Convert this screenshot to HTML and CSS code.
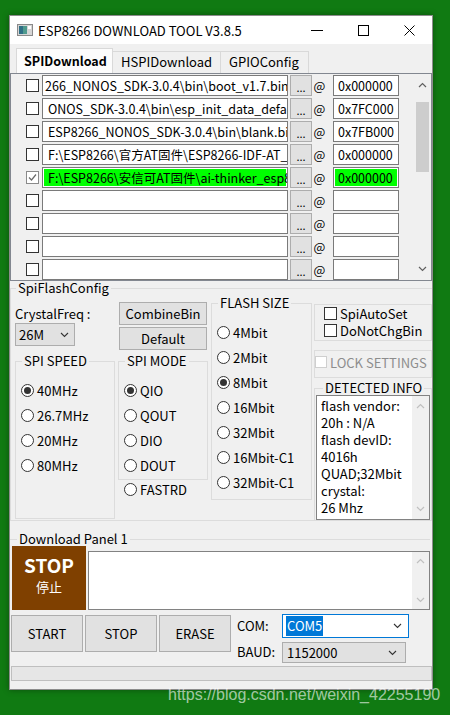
FILE: index.html
```html
<!DOCTYPE html>
<html lang="zh-CN">
<head>
    <meta charset="UTF-8">
    <meta name="viewport" content="width=device-width, initial-scale=1.0">
    <title>ESP8266 DOWNLOAD TOOL V3.8.5</title>
    <link rel="stylesheet" href="styles.css">
</head>
<body>
    <div class="window">
        <div class="titlebar">
            <svg class="app-icon" width="16" height="12" viewBox="0 0 16 12">
                <rect x="0.5" y="0.5" width="15" height="11" fill="#d6d6d6" stroke="#8a8a8a"/>
                <rect x="2" y="2" width="4" height="8" fill="#2f6f86"/>
                <rect x="6" y="2" width="4" height="8" fill="#4f9a8e"/>
                <rect x="11" y="2" width="3" height="3" fill="#ffffff"/>
            </svg>
            <span class="title">ESP8266 DOWNLOAD TOOL V3.8.5</span>
            <div class="win-controls">
                <span class="ctl"><svg width="12" height="12" viewBox="0 0 12 12"><line x1="0" y1="6.5" x2="12" y2="6.5" stroke="#000"/></svg></span>
                <span class="ctl"><svg width="11" height="11" viewBox="0 0 11 11"><rect x="0.5" y="0.5" width="10" height="10" fill="none" stroke="#000"/></svg></span>
                <span class="ctl"><svg width="11" height="11" viewBox="0 0 11 11"><path d="M0.5 0.5 L10.5 10.5 M10.5 0.5 L0.5 10.5" stroke="#000" fill="none"/></svg></span>
            </div>
        </div>

        <div class="tabs">
            <div class="tab active">SPIDownload</div>
            <div class="tab tab-hspi">HSPIDownload</div>
            <div class="tab tab-gpio">GPIOConfig</div>
        </div>

        <!-- firmware file list -->
        <div class="filelist">
            <div class="rows">
                <div class="row">
                    <span class="chk"></span>
                    <div class="path shifted">266_NONOS_SDK-3.0.4\bin\boot_v1.7.bin</div>
                    <button class="browse">...</button>
                    <span class="at">@</span>
                    <div class="addr">0x000000</div>
                </div>
                <div class="row">
                    <span class="chk"></span>
                    <div class="path">ONOS_SDK-3.0.4\bin\esp_init_data_defau</div>
                    <button class="browse">...</button>
                    <span class="at">@</span>
                    <div class="addr">0x7FC000</div>
                </div>
                <div class="row">
                    <span class="chk"></span>
                    <div class="path">ESP8266_NONOS_SDK-3.0.4\bin\blank.bin</div>
                    <button class="browse">...</button>
                    <span class="at">@</span>
                    <div class="addr">0x7FB000</div>
                </div>
                <div class="row">
                    <span class="chk"></span>
                    <div class="path">F:\ESP8266\官方AT固件\ESP8266-IDF-AT_V</div>
                    <button class="browse">...</button>
                    <span class="at">@</span>
                    <div class="addr">0x000000</div>
                </div>
                <div class="row">
                    <span class="chk checked"><svg width="11" height="11" viewBox="0 0 11 11"><path d="M2 5.5 L4.5 8 L9 2.5" fill="none" stroke="#6a6a6a" stroke-width="1.2"/></svg></span>
                    <div class="path ok">F:\ESP8266\安信可AT固件\ai-thinker_esp82</div>
                    <button class="browse">...</button>
                    <span class="at">@</span>
                    <div class="addr ok">0x000000</div>
                </div>
                <div class="row">
                    <span class="chk"></span>
                    <div class="path"></div>
                    <button class="browse">...</button>
                    <span class="at">@</span>
                    <div class="addr"></div>
                </div>
                <div class="row">
                    <span class="chk"></span>
                    <div class="path"></div>
                    <button class="browse">...</button>
                    <span class="at">@</span>
                    <div class="addr"></div>
                </div>
                <div class="row">
                    <span class="chk"></span>
                    <div class="path"></div>
                    <button class="browse">...</button>
                    <span class="at">@</span>
                    <div class="addr"></div>
                </div>
                <div class="row">
                    <span class="chk"></span>
                    <div class="path"></div>
                    <button class="browse">...</button>
                    <span class="at">@</span>
                    <div class="addr"></div>
                </div>
            </div>
            <div class="vscroll">
                <span class="arrow"><svg width="9" height="6" viewBox="0 0 9 6"><path d="M1 5 L4.5 1.5 L8 5" fill="none" stroke="#606060" stroke-width="1.2"/></svg></span>
                <div class="thumb"></div>
                <span class="arrow bottom"><svg width="9" height="6" viewBox="0 0 9 6"><path d="M1 1 L4.5 4.5 L8 1" fill="none" stroke="#606060" stroke-width="1.2"/></svg></span>
            </div>
        </div>

        <fieldset class="group config">
            <legend>SpiFlashConfig</legend>
            <div class="cols">
                <div class="col col-a">
                    <div class="crystal-label">CrystalFreq :</div>
                    <div class="combo crystal">
                        <span>26M</span>
                        <svg width="9" height="6" viewBox="0 0 9 6"><path d="M1 1 L4.5 4.5 L8 1" fill="none" stroke="#333" stroke-width="1.1"/></svg>
                    </div>
                    <fieldset class="group radios speed">
                        <legend>SPI SPEED</legend>
                        <div class="radio"><span class="dot on"></span>40MHz</div>
                        <div class="radio"><span class="dot"></span>26.7MHz</div>
                        <div class="radio"><span class="dot"></span>20MHz</div>
                        <div class="radio"><span class="dot"></span>80MHz</div>
                    </fieldset>
                </div>

                <div class="col col-b">
                    <button class="btn combine">CombineBin</button>
                    <button class="btn default">Default</button>
                    <fieldset class="group radios mode">
                        <legend>SPI MODE</legend>
                        <div class="radio"><span class="dot on"></span>QIO</div>
                        <div class="radio"><span class="dot"></span>QOUT</div>
                        <div class="radio"><span class="dot"></span>DIO</div>
                        <div class="radio"><span class="dot"></span>DOUT</div>
                    </fieldset>
                    <div class="radio fastrd"><span class="dot"></span>FASTRD</div>
                </div>

                <div class="col col-c">
                    <fieldset class="group radios size">
                        <legend>FLASH SIZE</legend>
                        <div class="radio"><span class="dot"></span>4Mbit</div>
                        <div class="radio"><span class="dot"></span>2Mbit</div>
                        <div class="radio"><span class="dot on"></span>8Mbit</div>
                        <div class="radio"><span class="dot"></span>16Mbit</div>
                        <div class="radio"><span class="dot"></span>32Mbit</div>
                        <div class="radio"><span class="dot"></span>16Mbit-C1</div>
                        <div class="radio"><span class="dot"></span>32Mbit-C1</div>
                    </fieldset>
                </div>

                <div class="col col-d">
                    <div class="box opts">
                        <div class="check"><span class="chk"></span>SpiAutoSet</div>
                        <div class="check"><span class="chk"></span>DoNotChgBin</div>
                    </div>
                    <div class="box lock">
                        <span class="chk disabled"></span>
                        <span class="lock-text">LOCK SETTINGS</span>
                    </div>
                    <fieldset class="group detected">
                        <legend>DETECTED INFO</legend>
                        <div class="info">
                            <div class="info-text">
                                flash vendor:<br>
                                20h : N/A<br>
                                flash devID:<br>
                                4016h<br>
                                QUAD;32Mbit<br>
                                crystal:<br>
                                26 Mhz
                            </div>
                            <div class="mini-scroll">
                                <svg width="9" height="6" viewBox="0 0 9 6"><path d="M1 5 L4.5 1.5 L8 5" fill="none" stroke="#c0c0c0" stroke-width="1.2"/></svg>
                                <svg width="9" height="6" viewBox="0 0 9 6"><path d="M1 1 L4.5 4.5 L8 1" fill="none" stroke="#c0c0c0" stroke-width="1.2"/></svg>
                            </div>
                        </div>
                    </fieldset>
                </div>
            </div>
        </fieldset>

        <fieldset class="group panel">
            <legend>Download Panel 1</legend>
            <div class="panel-body">
                <div class="stopbox">
                    <span class="stop-en">STOP</span>
                    <span class="stop-cn">停止</span>
                </div>
                <div class="log">
                    <div class="mini-scroll">
                        <svg width="9" height="6" viewBox="0 0 9 6"><path d="M1 5 L4.5 1.5 L8 5" fill="none" stroke="#c0c0c0" stroke-width="1.2"/></svg>
                        <svg width="9" height="6" viewBox="0 0 9 6"><path d="M1 1 L4.5 4.5 L8 1" fill="none" stroke="#c0c0c0" stroke-width="1.2"/></svg>
                    </div>
                </div>
            </div>
        </fieldset>

        <div class="actions">
            <button class="btn big">START</button>
            <button class="btn big">STOP</button>
            <button class="btn big">ERASE</button>
            <div class="ports">
                <span class="port-label">COM:</span>
                <div class="combo com">
                    <span class="selected">COM5</span>
                    <svg width="9" height="6" viewBox="0 0 9 6"><path d="M1 1 L4.5 4.5 L8 1" fill="none" stroke="#333" stroke-width="1.1"/></svg>
                </div>
                <span class="port-label">BAUD:</span>
                <div class="combo baud">
                    <span>1152000</span>
                    <svg width="9" height="6" viewBox="0 0 9 6"><path d="M1 1 L4.5 4.5 L8 1" fill="none" stroke="#333" stroke-width="1.1"/></svg>
                </div>
            </div>
        </div>

        <div class="statusbar"></div>
    </div>

    <div class="watermark">https://blog.csdn.net/weixin_42255190</div>
</body>
</html>
```

FILE: styles.css
```css
* {
    box-sizing: border-box;
}

body {
    margin: 0;
    width: 450px;
    height: 715px;
    overflow: hidden;
    position: relative;
    background-color: #107a12;
    font-family: "Noto Sans CJK SC", "Noto Sans", sans-serif;
    font-size: 13px;
    color: #000;
}

button {
    font-family: inherit;
    font-size: 13px;
    color: #000;
    padding: 0;
}

.window {
    margin: 15px 0 0 9px;
    width: 424px;
    height: 675px;
    background-color: #f0f0f0;
    border: 1px solid #8c8c8c;
    box-shadow: 0 0 6px rgba(0, 0, 0, 0.35);
}

/* title bar */
.titlebar {
    height: 28px;
    background-color: #fff;
    display: flex;
    align-items: center;
}

.app-icon {
    margin-left: 7px;
}

.title {
    margin-left: 5px;
    font-size: 13px;
}

.win-controls {
    margin-left: auto;
    display: flex;
    height: 100%;
}

.ctl {
    width: 46px;
    display: flex;
    align-items: center;
    justify-content: center;
}

/* tabs */
.tabs {
    height: 29px;
    display: flex;
    align-items: flex-end;
    padding-left: 6px;
}

.tab {
    height: 22px;
    line-height: 20px;
    padding-left: 7px;
    border: 1px solid #d9d9d9;
    border-bottom: none;
    background-color: #f0f0f0;
    margin-right: -1px;
}

.tab.active {
    width: 97px;
    height: 25px;
    line-height: 23px;
    font-weight: bold;
    font-size: 12.5px;
    background-color: #fcfcfc;
}

.tab-hspi {
    width: 109px;
    padding-left: 8px;
}

.tab-gpio {
    width: 89px;
    padding-left: 8px;
}

/* file list */
.filelist {
    height: 208px;
    border: 1px solid #828790;
    display: flex;
    background-color: #f0f0f0;
}

.rows {
    flex: 1;
    overflow: hidden;
    padding-top: 1px;
}

.row {
    display: flex;
    align-items: center;
    height: 21px;
    margin-bottom: 2px;
}

.chk {
    width: 13px;
    height: 13px;
    border: 1px solid #333;
    background-color: #fff;
    display: inline-flex;
    align-items: center;
    justify-content: center;
    flex-shrink: 0;
}

.row .chk {
    margin-left: 15px;
    margin-right: 3px;
}

.chk.checked {
    border-color: #8a8a8a;
}

.path,
.addr {
    height: 21px;
    border: 1px solid #7a7a7a;
    background-color: #fff;
    line-height: 19px;
    font-size: 12.5px;
    white-space: nowrap;
    overflow: hidden;
    flex-shrink: 0;
}

.path {
    width: 246px;
    padding-left: 5px;
}

.path.shifted {
    padding-left: 2px;
}

.addr {
    width: 66px;
    margin-left: 7px;
    padding-left: 4px;
}

.path.ok,
.addr.ok {
    background-color: #00ff00;
    box-shadow: inset 0 0 0 1px #fff;
}

.browse {
    width: 22px;
    height: 21px;
    margin-left: 2px;
    background-color: #e1e1e1;
    border: 1px solid #adadad;
    line-height: 22px;
    font-size: 11px;
    flex-shrink: 0;
}

.at {
    width: 13px;
    margin-left: 1px;
    text-align: center;
    font-size: 12.5px;
    flex-shrink: 0;
}

.vscroll {
    width: 17px;
    display: flex;
    flex-direction: column;
    align-items: center;
    background-color: #f0f0f0;
}

.arrow {
    height: 22px;
    display: flex;
    align-items: center;
}

.arrow.bottom {
    margin-top: auto;
}

.thumb {
    width: 13px;
    height: 70px;
    margin-top: 6px;
    background-color: #cdcdcd;
}

/* group boxes */
fieldset.group {
    margin: 0;
    min-width: 0;
    border: 1px solid #dcdcdc;
    padding: 0 0 0 5px;
}

fieldset.group legend {
    padding: 0 2px;
    margin-left: 1px;
    line-height: 14px;
    font-size: 13px;
}

fieldset.config {
    padding-left: 4px;
    border-right: none;
}

.cols {
    display: flex;
    align-items: flex-start;
}

.col {
    display: flex;
    flex-direction: column;
    align-items: flex-start;
}

.col-a {
    width: 100px;
}

.col-b {
    width: 90px;
    margin-left: 3px;
}

.col-c {
    width: 101px;
    margin-left: 3px;
}

.col-d {
    width: 118px;
    margin-left: 2px;
}

.crystal-label {
    margin-top: 11px;
    line-height: 16px;
}

.combo {
    display: flex;
    align-items: center;
    justify-content: space-between;
    border: 1px solid #adadad;
    background-color: #e1e1e1;
}

.crystal {
    width: 60px;
    height: 23px;
    margin-top: 1px;
    padding: 0 5px 0 3px;
}

.radios {
    width: 100%;
}

.radio {
    display: flex;
    align-items: center;
    height: 25px;
}

.dot {
    width: 13px;
    height: 13px;
    border-radius: 50%;
    border: 1px solid #333;
    background-color: #fff;
    margin-right: 3px;
    display: inline-flex;
    align-items: center;
    justify-content: center;
}

.dot.on::after {
    content: "";
    width: 7px;
    height: 7px;
    border-radius: 50%;
    background-color: #333;
}

fieldset.speed {
    margin-top: 8px;
    padding-top: 10px;
    padding-bottom: 40px;
}

.btn {
    background-color: #e1e1e1;
    border: 1px solid #adadad;
}

.combine {
    width: 88px;
    height: 23px;
    margin: 7px 0 0 1px;
}

.default {
    width: 88px;
    height: 23px;
    margin: 2px 0 0 1px;
}

fieldset.mode {
    margin-top: 4px;
    padding-top: 10px;
    padding-bottom: 1px;
}

.fastrd {
    height: 20px;
    margin: -1px 0 0 6px;
}

fieldset.size {
    margin-top: 1px;
    padding-top: 10px;
    padding-bottom: 4px;
}

.box {
    width: 100%;
    border: 1px solid #dcdcdc;
}

.opts {
    margin-top: 9px;
    padding: 0 0 1px 9px;
}

.check {
    display: flex;
    align-items: center;
    height: 17px;
}

.check .chk {
    margin-right: 3px;
}

.lock {
    margin-top: 9px;
    height: 28px;
    display: flex;
    align-items: center;
    padding-bottom: 4px;
}

.chk.disabled {
    border-color: #cfcfcf;
    width: 12px;
    height: 12px;
}

.lock-text {
    margin-left: 3px;
    color: #8d8d8d;
}

fieldset.detected {
    width: 100%;
    margin-top: 3px;
    padding: 0 1px;
    border-bottom: none;
}

fieldset.detected legend {
    margin-left: 7px;
}

.info {
    height: 125px;
    border: 1px solid #828282;
    background-color: #fff;
    display: flex;
}

.info-text {
    flex: 1;
    padding: 1px 0 0 4px;
    line-height: 17px;
    white-space: nowrap;
}

.mini-scroll {
    width: 17px;
    background-color: #f0f0f0;
    display: flex;
    flex-direction: column;
    align-items: center;
    justify-content: space-between;
    padding: 7px 0 7px;
}

/* download panel */
fieldset.panel {
    margin-top: 11px;
    padding-left: 2px;
    border-left: none;
    border-right: none;
    border-bottom: none;
    width: 420px;
}

fieldset.panel legend {
    margin-left: 5px;
}

.panel-body {
    display: flex;
    align-items: flex-end;
}

.stopbox {
    width: 74px;
    height: 64px;
    background-color: #7f4000;
    color: #fff;
    display: flex;
    flex-direction: column;
    align-items: center;
    justify-content: center;
    padding-bottom: 6px;
}

.stop-en {
    font-size: 19px;
    font-weight: bold;
    line-height: 24px;
}

.stop-cn {
    font-size: 13px;
    line-height: 20px;
}

.log {
    width: 342px;
    height: 59px;
    margin-left: 2px;
    border: 1px solid #828282;
    background-color: #fff;
    display: flex;
    justify-content: flex-end;
}

.log .mini-scroll {
    padding: 6px 0;
}

/* bottom controls */
.actions {
    display: flex;
    align-items: flex-start;
    margin-top: 4px;
    padding-left: 1px;
}

.big {
    width: 72px;
    height: 37px;
    margin: 1px 2px 0 0;
}

.ports {
    margin-left: 4px;
    display: grid;
    grid-template-columns: 45px auto;
    grid-template-rows: 24px 21px;
    row-gap: 4px;
    align-items: center;
}

.port-label {
    margin-top: -2px;
}

.com {
    width: 127px;
    height: 24px;
    border-color: #0078d7;
    background-color: #fff;
    padding: 0 6px 0 3px;
}

.selected {
    background-color: #0078d7;
    color: #fff;
    line-height: 20px;
    padding: 0 1px;
}

.baud {
    width: 124px;
    height: 21px;
    padding: 0 8px 0 4px;
}

.statusbar {
    margin: 3px 0 0 1px;
    width: 421px;
    height: 15px;
    border: 1px solid #bfbfbf;
    background-color: #e6e6e6;
}

.watermark {
    position: absolute;
    left: 168px;
    top: 686px;
    font-family: "Liberation Sans", Arial, sans-serif;
    font-size: 16px;
    color: rgba(255, 255, 255, 0.62);
}
```
